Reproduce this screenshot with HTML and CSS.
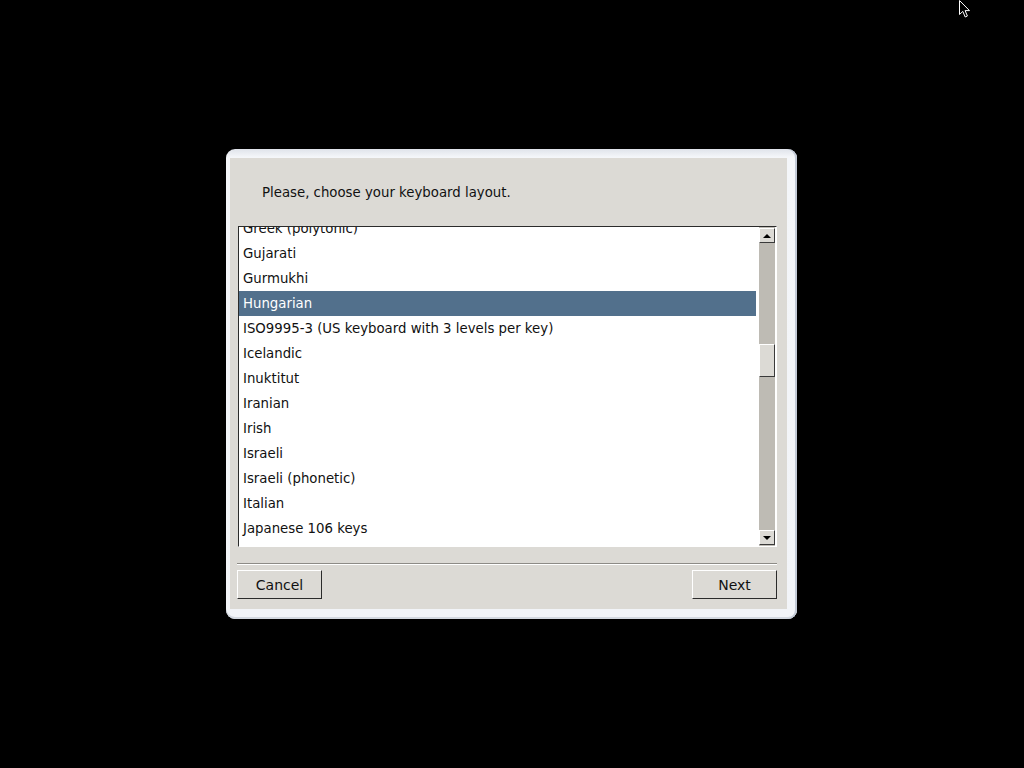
FILE: index.html
```html
<!DOCTYPE html>
<html lang="en">
<head>
  <meta charset="UTF-8">
  <title>Keyboard layout</title>
  <link rel="stylesheet" href="styles.css">
</head>
<body>
  <div class="screen">
    <div class="frame">
      <div class="dialog">
        <p class="prompt">Please, choose your keyboard layout.</p>

        <div class="listbox">
          <ul class="items">
            <li>Greek (polytonic)</li>
            <li>Gujarati</li>
            <li>Gurmukhi</li>
            <li class="selected">Hungarian</li>
            <li>ISO9995-3 (US keyboard with 3 levels per key)</li>
            <li>Icelandic</li>
            <li>Inuktitut</li>
            <li>Iranian</li>
            <li>Irish</li>
            <li>Israeli</li>
            <li>Israeli (phonetic)</li>
            <li>Italian</li>
            <li>Japanese 106 keys</li>
          </ul>
          <div class="scrollbar">
            <div class="arrow up"></div>
            <div class="track">
              <div class="thumb"></div>
            </div>
            <div class="arrow down"></div>
          </div>
        </div>

        <hr class="separator">

        <div class="buttons">
          <button class="btn">Cancel</button>
          <button class="btn">Next</button>
        </div>
      </div>
    </div>

    <svg class="cursor" width="13" height="20" viewBox="0 0 13 20">
      <path d="M1.5 1.5 L1.5 15.5 L4.8 12.4 L7.2 18 L9.4 17 L7.1 11.6 L11.5 11.6 Z" fill="#000" stroke="#fff" stroke-width="1"/>
    </svg>
  </div>
</body>
</html>
```

FILE: styles.css
```css
*, *::before, *::after {box-sizing: border-box; margin: 0; padding: 0}

body {
  background: #000;
  font-family: "DejaVu Sans", sans-serif;
  font-size: 13.3px;
  color: #111;
}

.screen {
  position: relative;
  width: 1024px;
  height: 768px;
  display: flex;
  align-items: center;
  justify-content: center;
  overflow: hidden;
}

/* window frame */
.frame {
  width: 571px;
  height: 470px;
  margin-left: -1px;
  padding: 9px 10px 10px 4px;
  border-radius: 9px;
  background: linear-gradient(to bottom, #dfe3ea 0, #f4f6f9 8px, #f2f4f8 100%);
  box-shadow: inset -2px 0 0 #c3cad6, inset 0 -2px 0 #d3d8e0;
}

.dialog {
  height: 100%;
  background: #dcdad5;
  padding: 26px 10px 10px 7px;
  display: flex;
  flex-direction: column;
}

.dialog > * {flex-shrink: 0}

.prompt {
  padding-left: 25px;
  line-height: 17px;
  margin-bottom: 25px;
}

/* list */
.listbox {
  margin-left: 1px;
  height: 321px;
  display: grid;
  grid-template-columns: 1fr 17px;
  background: #fff;
  border: 1px solid;
  border-color: #2b2b2b #fff #fff #2b2b2b;
}

.items {
  list-style: none;
  overflow: hidden;
  padding-right: 3px;
}

.items li {
  height: 25px;
  line-height: 25px;
  padding-left: 4px;
  white-space: nowrap;
}

.items li:first-child {margin-top: -11px}

.items .selected {
  background: #52708c;
  color: #fff;
}

.scrollbar {
  display: flex;
  flex-direction: column;
  background: #bebbb4;
  border-right: 1px solid #fff;
  padding: 1px 0;
}

.arrow {
  height: 15px;
  background: #dcdad5;
  border: 1px solid;
  border-color: #fff #3a3a3a #3a3a3a #fff;
  display: grid;
  place-items: center;
}

.arrow::before {
  content: "";
  border-left: 4px solid transparent;
  border-right: 4px solid transparent;
}

.up::before {border-bottom: 4px solid #000}
.down::before {border-top: 4px solid #000}

.track {
  flex: 1;
  padding-top: 101px;
}

.thumb {
  height: 33px;
  background: #dcdad5;
  border: 1px solid;
  border-color: #fff #3a3a3a #3a3a3a #fff;
}

.separator {
  margin: 16px 0 5px;
  border: 0;
  border-top: 1px solid #8d8b86;
  border-bottom: 1px solid #fff;
}

.buttons {
  display: flex;
  justify-content: space-between;
}

.btn {
  width: 85px;
  height: 29px;
  font: inherit;
  font-size: 14px;
  color: #111;
  background: #dcdad5;
  border: 1px solid;
  border-color: #fff #2b2b2b #2b2b2b #fff;
}

.cursor {
  position: absolute;
  left: 958px;
  top: -1px;
}
```
